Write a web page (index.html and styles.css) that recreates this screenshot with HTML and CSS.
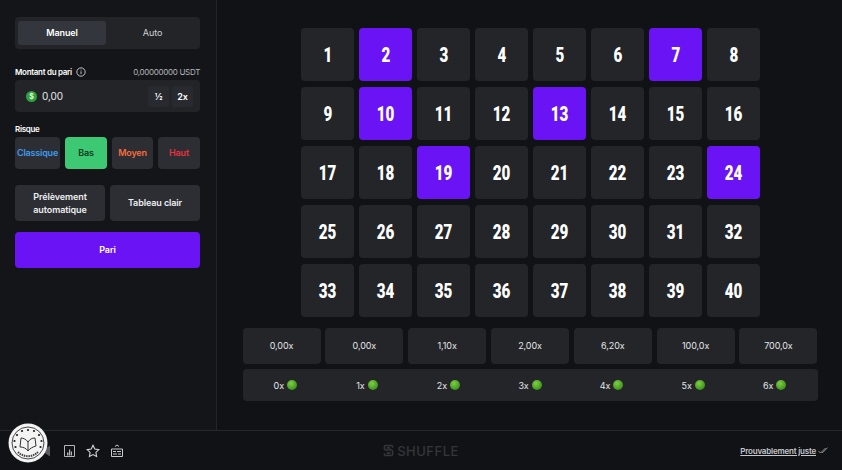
FILE: index.html
```html
<!DOCTYPE html>
<html lang="fr">

<head>
    <meta charset="UTF-8">
    <title>Keno | Shuffle</title>
    <link rel="stylesheet" href="styles.css">
</head>

<body>
    <div class="game">
        <div class="side">
            <div class="tabs">
                <div class="tab active">Manuel</div>
                <div class="tab">Auto</div>
            </div>
            <div class="label-row amount-label">
                <span class="label">Montant du pari
                    <svg class="info" viewBox="0 0 12 12" width="10" height="10">
                        <circle cx="6" cy="6" r="5" fill="none" stroke="#e4e4e6" stroke-width="1"></circle>
                        <path d="M6 5.2v3.2M6 3.2v1" stroke="#e4e4e6" stroke-width="1"></path>
                    </svg>
                </span>
                <span class="balance">0,00000000 USDT</span>
            </div>
            <div class="amount">
                <span class="coin">$</span>
                <span class="value">0,00</span>
                <span class="mini">½</span>
                <span class="mini">2x</span>
            </div>
            <div class="label risk-label">Risque</div>
            <div class="risks">
                <div class="risk classic">Classique</div>
                <div class="risk low">Bas</div>
                <div class="risk medium">Moyen</div>
                <div class="risk high">Haut</div>
            </div>
            <div class="actions">
                <div class="action auto-pick">Prélèvement automatique</div>
                <div class="action clear">Tableau clair</div>
            </div>
            <div class="bet">Pari</div>
        </div>
        <div class="main">
            <div class="board">
                <div class="tile"><span>1</span></div>
                <div class="tile on"><span>2</span></div>
                <div class="tile"><span>3</span></div>
                <div class="tile"><span>4</span></div>
                <div class="tile"><span>5</span></div>
                <div class="tile"><span>6</span></div>
                <div class="tile on"><span>7</span></div>
                <div class="tile"><span>8</span></div>
                <div class="tile"><span>9</span></div>
                <div class="tile on"><span>10</span></div>
                <div class="tile"><span>11</span></div>
                <div class="tile"><span>12</span></div>
                <div class="tile on"><span>13</span></div>
                <div class="tile"><span>14</span></div>
                <div class="tile"><span>15</span></div>
                <div class="tile"><span>16</span></div>
                <div class="tile"><span>17</span></div>
                <div class="tile"><span>18</span></div>
                <div class="tile on"><span>19</span></div>
                <div class="tile"><span>20</span></div>
                <div class="tile"><span>21</span></div>
                <div class="tile"><span>22</span></div>
                <div class="tile"><span>23</span></div>
                <div class="tile on"><span>24</span></div>
                <div class="tile"><span>25</span></div>
                <div class="tile"><span>26</span></div>
                <div class="tile"><span>27</span></div>
                <div class="tile"><span>28</span></div>
                <div class="tile"><span>29</span></div>
                <div class="tile"><span>30</span></div>
                <div class="tile"><span>31</span></div>
                <div class="tile"><span>32</span></div>
                <div class="tile"><span>33</span></div>
                <div class="tile"><span>34</span></div>
                <div class="tile"><span>35</span></div>
                <div class="tile"><span>36</span></div>
                <div class="tile"><span>37</span></div>
                <div class="tile"><span>38</span></div>
                <div class="tile"><span>39</span></div>
                <div class="tile"><span>40</span></div>
            </div>
            <div class="payouts">
                <div class="payout">0,00x</div>
                <div class="payout">0,00x</div>
                <div class="payout">1,10x</div>
                <div class="payout">2,00x</div>
                <div class="payout">6,20x</div>
                <div class="payout">100,0x</div>
                <div class="payout">700,0x</div>
            </div>
            <div class="hits">
                <div class="hit">0x <i class="gem"></i></div>
                <div class="hit">1x <i class="gem"></i></div>
                <div class="hit">2x <i class="gem"></i></div>
                <div class="hit">3x <i class="gem"></i></div>
                <div class="hit">4x <i class="gem"></i></div>
                <div class="hit">5x <i class="gem"></i></div>
                <div class="hit">6x <i class="gem"></i></div>
            </div>
        </div>
    </div>
    <div class="footer">
        <div class="tools">
            <svg viewBox="0 0 12 12" width="12" height="12">
                <path d="M2 4h3l5-3.500v11L5 8H2z" fill="#5a5c60"></path>
            </svg>
            <svg viewBox="0 0 11 12" width="11" height="12">
                <path d="M.5.500h10v11H.5z" fill="none" stroke="#b4b5b8"></path>
                <path d="M3 7.500h1.500v3H3zM5 4.500h1.200v6H5zM6.800 6.500H8v4H6.800z" fill="#b4b5b8"></path>
            </svg>
            <svg viewBox="0 0 14 14" width="14" height="14">
                <path d="M7 1.300l1.800 3.700 4 .6-2.900 2.800.7 4L7 10.500l-3.600 1.900.7-4L1.200 5.600l4-.6z" fill="none"
                    stroke="#d4d5d7" stroke-width="1.100"></path>
            </svg>
            <svg viewBox="0 0 12 13" width="12" height="13">
                <path d="M4 2.500l2-1.500 2 1.500M.5 5h11v7.500H.5z" fill="none" stroke="#c9cacc"></path>
                <path d="M2 7.500h3M6 7.500h4M2 10h4M7 10h3" stroke="#c9cacc"></path>
            </svg>
        </div>
        <div class="brand">
            <svg viewBox="0 0 12 14" width="11" height="13">
                <path d="M10.500 4V2.500l-1-1h-7l-1 1v3l1 1h7l1 1v4l-1 1h-7l-1-1V10M4 5l2-1.500L8 5M4 9l2 1.500L8 9" fill="none"
                    stroke="#34363a" stroke-width="1.600"></path>
            </svg>
            <span>SHUFFLE</span>
        </div>
        <div class="fair">
            <a>Prouvablement juste</a>
            <svg viewBox="0 0 12 8" width="10" height="7">
                <path d="M.5 4.500L3 7l6-6M4.500 6.500L5 7l6.500-6.500" fill="none" stroke="#b9bbbe" stroke-width=".9"></path>
            </svg>
        </div>
    </div>
    <div class="stamp">
        <svg viewBox="0 0 40 40" width="40" height="40">
            <circle cx="20" cy="20" r="19.500" fill="#f4f4f4"></circle>
            <circle cx="20" cy="20" r="16" fill="none" stroke="#1c1c1c" stroke-width=".8"></circle>
            <g fill="#1c1c1c">
                <circle cx="20" cy="7" r="1.100"></circle>
                <circle cx="14" cy="8" r="1.100"></circle>
                <circle cx="26" cy="8" r="1.100"></circle>
                <circle cx="9" cy="12" r="1.100"></circle>
                <circle cx="31" cy="12" r="1.100"></circle>
                <circle cx="6.500" cy="18" r="1.100"></circle>
                <circle cx="33.500" cy="18" r="1.100"></circle>
                <circle cx="7.500" cy="24" r="1.100"></circle>
                <circle cx="32.500" cy="24" r="1.100"></circle>
            </g>
            <path d="M20 19c-2-3-5-4-7-4l-1 9c3 0 6 1 8 4 2-3 5-4 8-5l-1-8c-3 0-5 1-7 4zM20 19v9" fill="none" stroke="#333"
                stroke-width="1"></path>
            <path d="M10 29a14 14 0 0 0 20 0" fill="none" stroke="#444" stroke-width="2" stroke-dasharray="1.500 .8"></path>
        </svg>
    </div>
</body>

</html>
```
FILE: styles.css
```css
* {
    box-sizing: border-box;
}

html,
body {
    height: 100%;
}

body {
    margin: 0;
    background: #111215;
    color: #fff;
    font-family: Inter, "Liberation Sans", sans-serif;
    font-size: 9px;
    letter-spacing: -.1px;
    overflow: hidden;
}

.game {
    display: flex;
    height: 430px;
}

.side {
    width: 217px;
    flex: none;
    padding: 17px 16px 0 15px;
    background: #141518;
    border-right: 1px solid #222427;
}

.tabs {
    display: flex;
    height: 32px;
    padding: 4px 3px;
    background: #222428;
    border-radius: 4px;
}

.tab {
    flex: 1;
    display: flex;
    align-items: center;
    justify-content: center;
    padding: 0 0 2px 2px;
    color: #d3d4d6;
    border-radius: 3px;
}

.tab.active {
    flex: none;
    width: 88px;
    padding-left: 0;
    background: #33363c;
    color: #fff;
    font-weight: 600;
}

.label-row {
    display: flex;
    align-items: center;
    justify-content: space-between;
}

.amount-label {
    margin-top: 16px;
    height: 14px;
}

.label {
    display: flex;
    align-items: center;
    gap: 4px;
    font-size: 8px;
    font-weight: 600;
    letter-spacing: -.3px;
}

.balance {
    font-size: 8px;
    letter-spacing: -.3px;
    color: #b4b6b9;
}

.amount {
    display: flex;
    align-items: center;
    gap: 3px;
    height: 32px;
    margin-top: 1px;
    padding: 0 7px 0 11px;
    background: #222428;
    border-radius: 4px;
}

.coin {
    width: 11px;
    height: 11px;
    border-radius: 50%;
    background: #2fa23a;
    color: #e8f5e9;
    font-size: 7px;
    font-weight: 700;
    text-align: center;
    line-height: 11px;
}

.value {
    flex: 1;
    margin-left: 2px;
    font-size: 10px;
    color: #e9e9ea;
}

.mini {
    width: 21px;
    height: 21px;
    background: #282a2f;
    border-radius: 3px;
    text-align: center;
    line-height: 21px;
    font-weight: 600;
}

.risk-label {
    margin-top: 12px;
    height: 10px;
}

.risks {
    display: flex;
    gap: 5px;
    margin-top: 3px;
}

.risk {
    height: 32px;
    display: flex;
    align-items: center;
    justify-content: center;
    padding-bottom: 1px;
    background: #2c2e34;
    border-radius: 4px;
    font-weight: 600;
    letter-spacing: -.2px;
}

.classic {
    width: 45px;
    color: #3f9cec;
}

.low {
    width: 42px;
    background: #3dc873;
    color: #0e3a1e;
}

.medium {
    width: 41px;
    color: #f56c3c;
}

.high {
    width: 42px;
    color: #e5323c;
}

.actions {
    display: flex;
    gap: 5px;
    margin-top: 16px;
}

.action {
    height: 36px;
    display: flex;
    align-items: center;
    justify-content: center;
    padding: 0 6px 1px;
    text-align: center;
    line-height: 13px;
    background: #2c2e34;
    border-radius: 4px;
    font-weight: 600;
    color: #eeeeef;
}

.auto-pick {
    width: 90px;
}

.clear {
    width: 90px;
}

.bet {
    height: 36px;
    margin-top: 11px;
    display: flex;
    align-items: center;
    justify-content: center;
    padding-bottom: 2px;
    background: #6a14f5;
    border-radius: 4px;
    font-weight: 600;
}

.main {
    flex: 1;
    padding-top: 28px;
    display: flex;
    flex-direction: column;
    align-items: center;
}

.board {
    display: grid;
    grid-template-columns: repeat(8, 53px);
    grid-auto-rows: 53px;
    column-gap: 5px;
    row-gap: 6px;
    margin-left: 1px;
}

.tile {
    display: flex;
    align-items: center;
    justify-content: center;
    padding-left: 1px;
    background: #232529;
    border-radius: 4px;
    font-family: "Roboto", "Liberation Sans", sans-serif;
    font-size: 20px;
    font-weight: 900;
    letter-spacing: 0;
}

/* no Oswald here, so squeeze a heavy face */
.tile span {
    display: inline-block;
    transform: scaleX(.76);
}

.tile.on {
    background: #6a14f5;
}

.payouts {
    display: flex;
    justify-content: space-between;
    width: 575px;
    margin-top: 11px;
    margin-left: 1px;
}

.payout {
    width: 78px;
    height: 36px;
    display: flex;
    align-items: center;
    justify-content: center;
    padding-bottom: 1px;
    background: #232529;
    border-radius: 4px;
    color: #e4e5e6;
}

.hits {
    display: flex;
    align-items: center;
    width: 575px;
    height: 32px;
    margin-top: 5px;
    margin-left: 1px;
    padding: 0 2px;
    background: #232529;
    border-radius: 4px;
}

.hit {
    flex: 1;
    display: flex;
    align-items: center;
    justify-content: center;
    gap: 3px;
    color: #e4e5e6;
}

.gem {
    width: 10px;
    height: 10px;
    border-radius: 50%;
    background: radial-gradient(circle at 40% 35%, #7ed03f, #3f9420 70%, #2c6e18);
}

.footer {
    display: grid;
    grid-template-columns: 1fr auto 1fr;
    align-items: center;
    height: 40px;
    padding: 0 14px;
    border-top: 1px solid #26282b;
}

.tools {
    display: flex;
    align-items: center;
    gap: 12px;
    margin-left: 26px;
}

.tools svg:nth-child(2) {
    margin-right: -1px;
}

.tools svg:nth-child(3) {
    margin-right: -1px;
}

.brand {
    display: flex;
    align-items: center;
    gap: 3px;
    color: #34363a;
    font-size: 13px;
    font-weight: 500;
    letter-spacing: .5px;
}

.fair {
    display: flex;
    align-items: center;
    justify-content: flex-end;
    gap: 2px;
    font-size: 8px;
    font-weight: 600;
    letter-spacing: -.2px;
    color: #c5c7cb;
}

.fair a {
    text-decoration: underline;
}

.stamp {
    position: absolute;
    left: 8px;
    top: 423px;
    width: 40px;
    height: 40px;
}
```
